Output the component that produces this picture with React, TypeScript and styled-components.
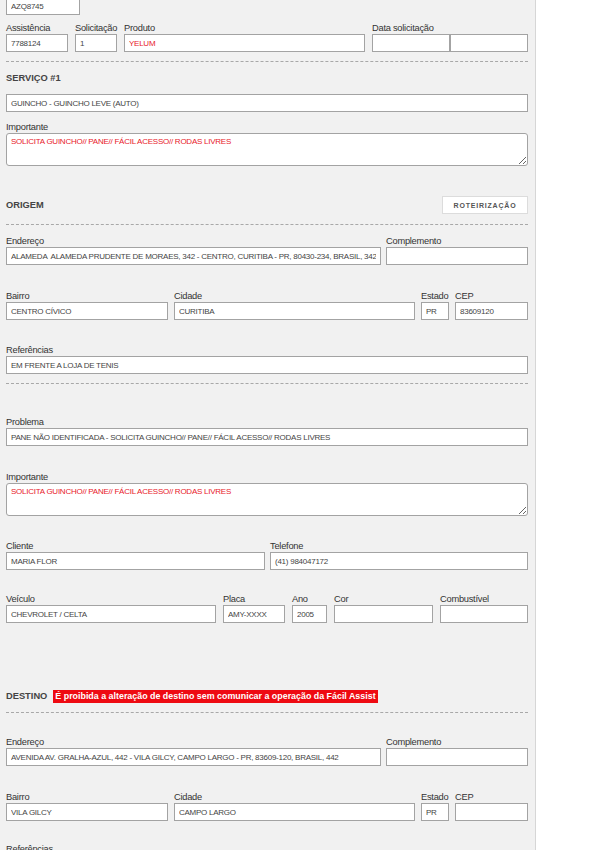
import styled, { createGlobalStyle } from 'styled-components';

const GlobalStyle = createGlobalStyle`
  body {
    margin: 0;
    background: #ffffff;
    font-family: "Liberation Sans", Arial, sans-serif;
  }
`;

const Panel = styled.div`
  width: 522px;
  min-height: 100vh;
  padding: 0 7px 40px 6px;
  background: #f1f1f1;
  border-right: 1px solid #d6d6d6;
  overflow: hidden;
`;

const Row = styled.div<{ $mt?: number; $gap?: number }>`
  display: flex;
  align-items: flex-end;
  gap: ${(p) => p.$gap ?? 7}px;
  margin-top: ${(p) => p.$mt ?? 0}px;
`;

const Field = styled.div<{ $w?: number }>`
  display: flex;
  flex-direction: column;
  ${(p) => (p.$w ? `width: ${p.$w}px; flex: none;` : 'flex: 1; min-width: 0;')}
`;

const Label = styled.label`
  display: block;
  height: 12px;
  font-size: 9.3px;
  line-height: 12px;
  letter-spacing: -0.25px;
  color: #333333;
  white-space: nowrap;
`;

const Input = styled.input<{ $red?: boolean }>`
  box-sizing: border-box;
  width: 100%;
  height: 18px;
  margin: 0;
  padding: 0 4px;
  border: 1px solid #a3a3a3;
  border-radius: 0;
  background: #ffffff;
  font-family: inherit;
  font-size: 8px;
  letter-spacing: -0.25px;
  color: ${(p) => (p.$red ? '#e8202a' : '#444444')};
  outline: none;
`;

const TextArea = styled.textarea`
  display: block;
  box-sizing: border-box;
  width: 100%;
  height: 33px;
  margin: 0;
  padding: 3px 4px;
  border: 1px solid #a3a3a3;
  border-radius: 3px;
  background: #ffffff;
  font-family: inherit;
  font-size: 8px;
  letter-spacing: -0.25px;
  color: #e8202a;
  resize: vertical;
  outline: none;
`;

const DateGroup = styled.div`
  display: flex;
  ${Input} {
    width: 78px;
  }
`;

const Dashed = styled.div<{ $mt?: number }>`
  height: 0;
  margin-top: ${(p) => p.$mt ?? 0}px;
  border-top: 1px dashed #a8a8a8;
`;

const SectionHead = styled.div<{ $mt?: number; $h?: number }>`
  display: flex;
  align-items: center;
  justify-content: space-between;
  height: ${(p) => p.$h ?? 18}px;
  margin-top: ${(p) => p.$mt ?? 0}px;
`;

const SectionTitle = styled.div`
  display: flex;
  align-items: center;
  gap: 6px;
  font-size: 9.3px;
  font-weight: bold;
  color: #444444;
`;

const Warning = styled.span`
  background: #ee0a12;
  color: #ffffff;
  font-weight: bold;
  font-size: 8.9px;
  line-height: 13px;
  padding: 0 2px;
`;

const RouteButton = styled.button`
  width: 86px;
  height: 18px;
  padding: 0;
  border: 1px solid #dcdcdc;
  background: #ffffff;
  font-family: inherit;
  font-size: 7px;
  font-weight: bold;
  letter-spacing: 0.8px;
  color: #555555;
`;

export default function App() {
  return (
    <>
      <GlobalStyle />
      <Panel>
        <Row $mt={-3}>
          <Field $w={74}>
            <Input readOnly value="AZQ8745" />
          </Field>
        </Row>

        <Row $mt={7}>
          <Field $w={62}>
            <Label>Assistência</Label>
            <Input readOnly value="7788124" />
          </Field>
          <Field $w={42}>
            <Label>Solicitação</Label>
            <Input readOnly value="1" />
          </Field>
          <Field>
            <Label>Produto</Label>
            <Input readOnly $red value="YELUM" />
          </Field>
          <Field $w={156}>
            <Label>Data solicitação</Label>
            <DateGroup>
              <Input readOnly value="" />
              <Input readOnly value="" />
            </DateGroup>
          </Field>
        </Row>

        <Dashed $mt={9} />

        <SectionHead $mt={7}>
          <SectionTitle>SERVIÇO #1</SectionTitle>
        </SectionHead>

        <Row $mt={7}>
          <Field>
            <Input readOnly value="GUINCHO - GUINCHO LEVE (AUTO)" />
          </Field>
        </Row>
        <Row $mt={9}>
          <Field>
            <Label>Importante</Label>
            <TextArea readOnly value="SOLICITA GUINCHO// PANE// FÁCIL ACESSO// RODAS LIVRES" />
          </Field>
        </Row>

        <SectionHead $mt={30}>
          <SectionTitle>ORIGEM</SectionTitle>
          <RouteButton>ROTEIRIZAÇÃO</RouteButton>
        </SectionHead>

        <Dashed $mt={10} />

        <Row $mt={10} $gap={5}>
          <Field>
            <Label>Endereço</Label>
            <Input
              readOnly
              value="ALAMEDA  ALAMEDA PRUDENTE DE MORAES, 342 - CENTRO, CURITIBA - PR, 80430-234, BRASIL, 342"
            />
          </Field>
          <Field $w={142}>
            <Label>Complemento</Label>
            <Input readOnly value="" />
          </Field>
        </Row>

        <Row $mt={25} $gap={6}>
          <Field $w={162}>
            <Label>Bairro</Label>
            <Input readOnly value="CENTRO CÍVICO" />
          </Field>
          <Field>
            <Label>Cidade</Label>
            <Input readOnly value="CURITIBA" />
          </Field>
          <Field $w={28}>
            <Label>Estado</Label>
            <Input readOnly value="PR" />
          </Field>
          <Field $w={73}>
            <Label>CEP</Label>
            <Input readOnly value="83609120" />
          </Field>
        </Row>

        <Row $mt={24}>
          <Field>
            <Label>Referências</Label>
            <Input readOnly value="EM FRENTE A LOJA DE TENIS" />
          </Field>
        </Row>

        <Dashed $mt={9} />

        <Row $mt={32}>
          <Field>
            <Label>Problema</Label>
            <Input
              readOnly
              value="PANE NÃO IDENTIFICADA - SOLICITA GUINCHO// PANE// FÁCIL ACESSO// RODAS LIVRES"
            />
          </Field>
        </Row>
        <Row $mt={25}>
          <Field>
            <Label>Importante</Label>
            <TextArea readOnly value="SOLICITA GUINCHO// PANE// FÁCIL ACESSO// RODAS LIVRES" />
          </Field>
        </Row>

        <Row $mt={24} $gap={5}>
          <Field $w={259}>
            <Label>Cliente</Label>
            <Input readOnly value="MARIA FLOR" />
          </Field>
          <Field>
            <Label>Telefone</Label>
            <Input readOnly value="(41) 984047172" />
          </Field>
        </Row>

        <Row $mt={23}>
          <Field>
            <Label>Veículo</Label>
            <Input readOnly value="CHEVROLET / CELTA" />
          </Field>
          <Field $w={62}>
            <Label>Placa</Label>
            <Input readOnly value="AMY-XXXX" />
          </Field>
          <Field $w={35}>
            <Label>Ano</Label>
            <Input readOnly value="2005" />
          </Field>
          <Field $w={99}>
            <Label>Cor</Label>
            <Input readOnly value="" />
          </Field>
          <Field $w={88}>
            <Label>Combustível</Label>
            <Input readOnly value="" />
          </Field>
        </Row>

        <SectionHead $mt={66} $h={14}>
          <SectionTitle>
            DESTINO
            <Warning>É proibida a alteração de destino sem comunicar a operação da Fácil Assist</Warning>
          </SectionTitle>
        </SectionHead>

        <Dashed $mt={9} />

        <Row $mt={23} $gap={5}>
          <Field>
            <Label>Endereço</Label>
            <Input
              readOnly
              value="AVENIDA AV. GRALHA-AZUL, 442 - VILA GILCY, CAMPO LARGO - PR, 83609-120, BRASIL, 442"
            />
          </Field>
          <Field $w={142}>
            <Label>Complemento</Label>
            <Input readOnly value="" />
          </Field>
        </Row>

        <Row $mt={25} $gap={6}>
          <Field $w={162}>
            <Label>Bairro</Label>
            <Input readOnly value="VILA GILCY" />
          </Field>
          <Field>
            <Label>Cidade</Label>
            <Input readOnly value="CAMPO LARGO" />
          </Field>
          <Field $w={28}>
            <Label>Estado</Label>
            <Input readOnly value="PR" />
          </Field>
          <Field $w={73}>
            <Label>CEP</Label>
            <Input readOnly value="" />
          </Field>
        </Row>

        <Row $mt={22}>
          <Field>
            <Label>Referências</Label>
            <Input readOnly value="" />
          </Field>
        </Row>
      </Panel>
    </>
  );
}
